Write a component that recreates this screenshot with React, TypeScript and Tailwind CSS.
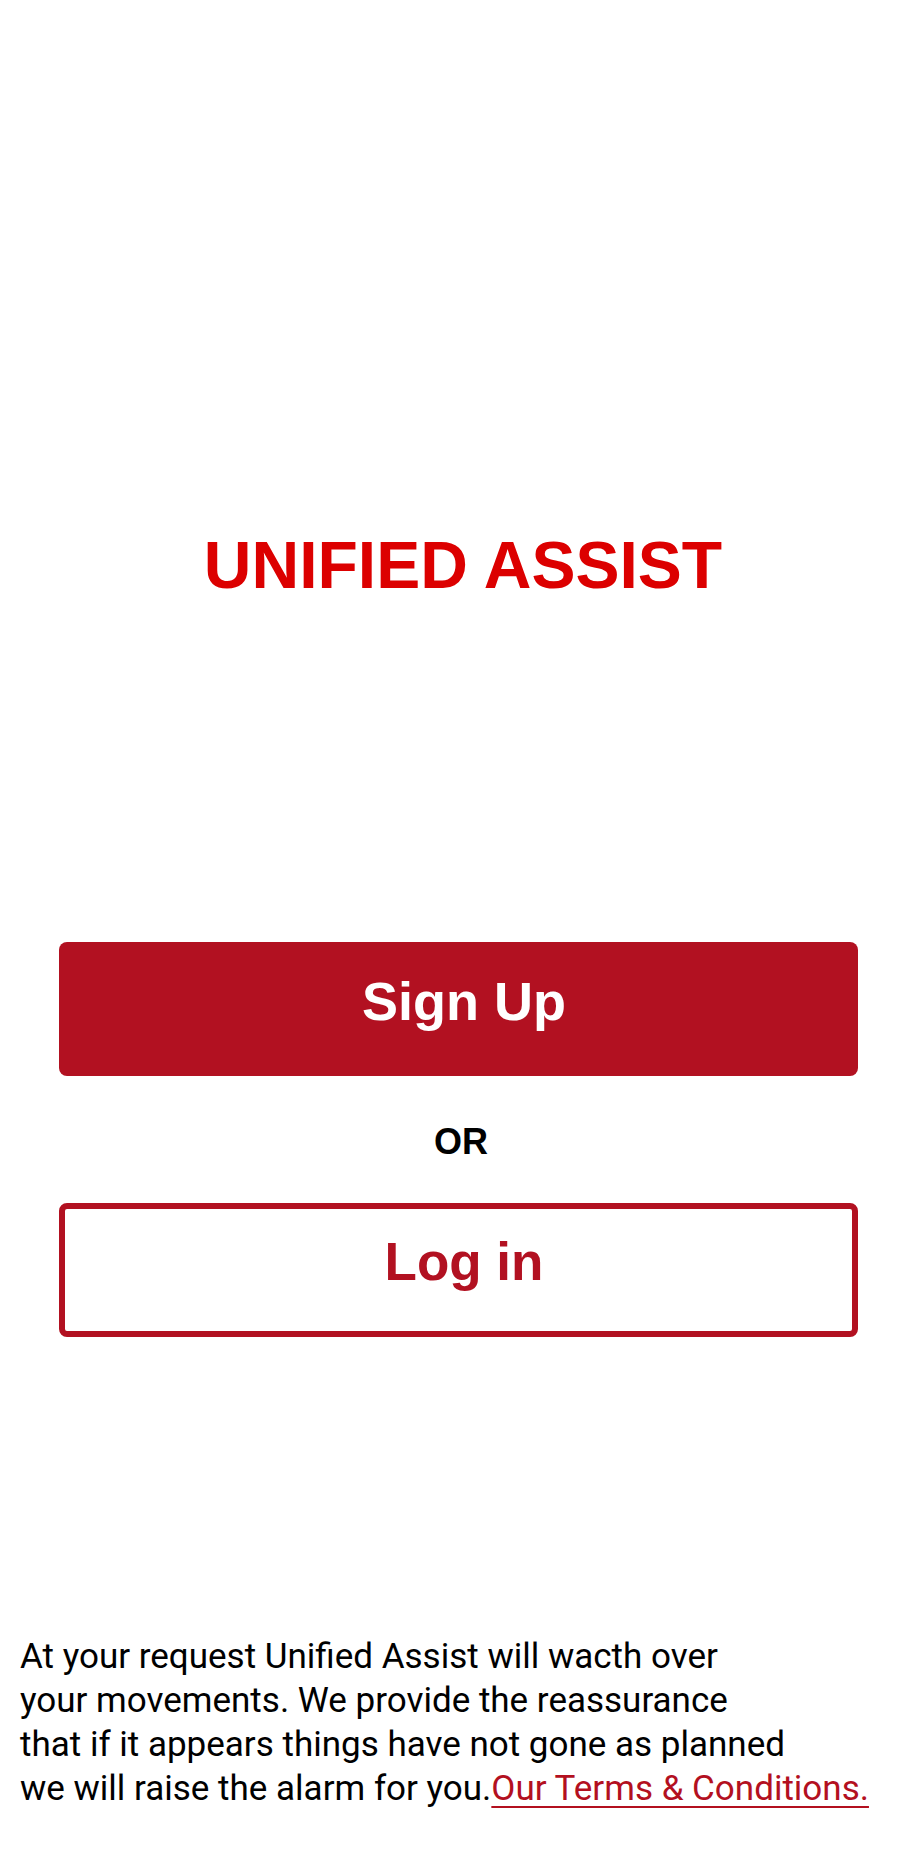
export default function App() {
  return (
    <div className="flex h-[1859px] w-[920px] flex-col bg-white" style={{ fontFamily: '"Liberation Sans", Arial, sans-serif' }}>
      <h1 className="mt-[532px] pl-[6px] text-center text-[66px] font-bold leading-none text-[#dc0000]">UNIFIED ASSIST</h1>

      <div className="mt-[344px] ml-[59px] flex w-[799px] flex-col">
        <button className="flex h-[134px] items-center justify-center rounded-[8px] bg-[#b21121] pb-[16px] pl-[11px] text-[54px] font-bold leading-none text-white">
          Sign Up
        </button>
        <div className="flex h-[127px] items-center justify-center pt-[5px] pl-[5px] text-[36px] font-bold leading-none text-black">OR</div>
        <button className="flex h-[134px] items-center justify-center rounded-[8px] border-[6px] border-[#b21121] bg-white pb-[18px] pl-[11px] text-[53px] font-bold leading-none text-[#b21121]">
          Log in
        </button>
      </div>

      <p className="mt-auto mb-[48px] pl-[20px] text-[35px] leading-[44px] text-black" style={{ fontFamily: 'Roboto, "Liberation Sans", sans-serif' }}>
        <span className="block whitespace-nowrap">At your request Unified Assist will wacth over</span>
        <span className="block whitespace-nowrap">your movements. We provide the reassurance</span>
        <span className="block whitespace-nowrap">that if it appears things have not gone as planned</span>
        <span className="block whitespace-nowrap">
          we will raise the alarm for you.
          <a href="#" className="text-[#b3101f] underline decoration-[2px] underline-offset-[6px]">Our Terms &amp; Conditions.</a>
        </span>
      </p>
    </div>
  );
}
